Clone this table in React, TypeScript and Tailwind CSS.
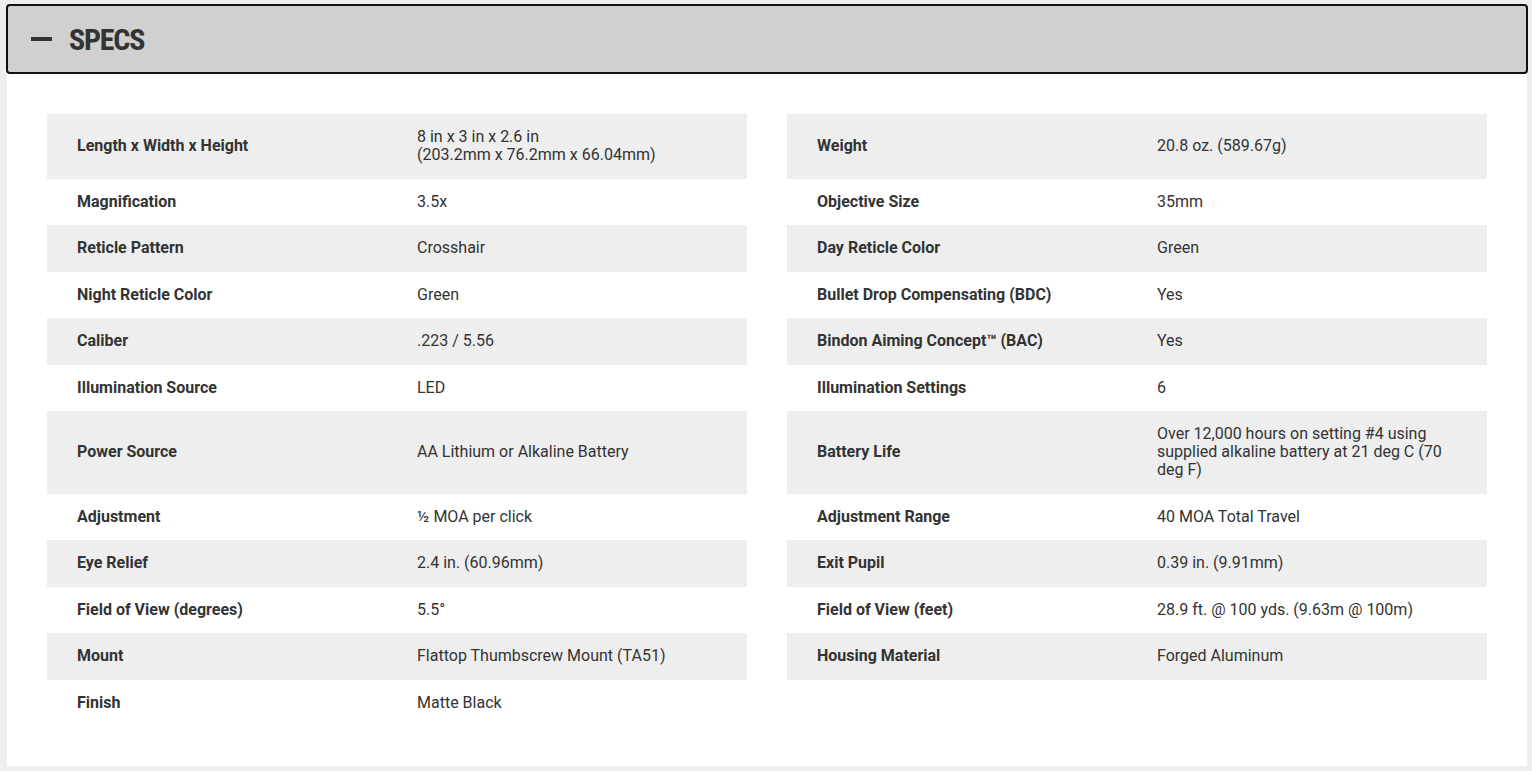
const specs: [string, string, string, string][] = [
  ["Length x Width x Height", "8 in x 3 in x 2.6 in\n(203.2mm x 76.2mm x 66.04mm)", "Weight", "20.8 oz. (589.67g)"],
  ["Magnification", "3.5x", "Objective Size", "35mm"],
  ["Reticle Pattern", "Crosshair", "Day Reticle Color", "Green"],
  ["Night Reticle Color", "Green", "Bullet Drop Compensating (BDC)", "Yes"],
  ["Caliber", ".223 / 5.56", "Bindon Aiming Concept™ (BAC)", "Yes"],
  ["Illumination Source", "LED", "Illumination Settings", "6"],
  ["Power Source", "AA Lithium or Alkaline Battery", "Battery Life", "Over 12,000 hours on setting #4 using supplied alkaline battery at 21 deg C (70 deg F)"],
  ["Adjustment", "½ MOA per click", "Adjustment Range", "40 MOA Total Travel"],
  ["Eye Relief", "2.4 in. (60.96mm)", "Exit Pupil", "0.39 in. (9.91mm)"],
  ["Field of View (degrees)", "5.5°", "Field of View (feet)", "28.9 ft. @ 100 yds. (9.63m @ 100m)"],
  ["Mount", "Flattop Thumbscrew Mount (TA51)", "Housing Material", "Forged Aluminum"],
  ["Finish", "Matte Black", "", ""],
]

function SpecCell({ label, value, striped }: { label: string; value: string; striped: boolean }) {
  return (
    <div className={`flex items-center text-[16px] leading-[18px] text-[#333] ${striped && label ? "bg-[#eeeeee]" : "bg-white"}`}>
      <div className="w-[370px] shrink-0 pl-[30px] pr-4 py-[14.25px] font-bold">{label}</div>
      <div className="flex-1 pr-[30px] py-[14.25px] whitespace-pre-line">{value}</div>
    </div>
  )
}

export default function App() {
  return (
    <div className="min-h-screen bg-[#eeeeee] pl-[6px] pr-[4px] pt-[4px] pb-[6px]" style={{ fontFamily: "Roboto, 'Liberation Sans', sans-serif" }}>
      <div className="flex items-center h-[70px] bg-[#d0d0d0] border-2 border-[#111] rounded-[4px] pl-[23px]">
        <span className="block w-[21px] h-[4px] bg-[#333]" />
        <h2 className="ml-[17px] text-[30px] font-bold text-[#333] tracking-[-1.2px]" style={{ fontFamily: "'Roboto Condensed', Roboto, sans-serif" }}>
          SPECS
        </h2>
      </div>
      <div className="ml-[1px] mr-[1px] bg-white p-[40px]">
        <div className="flex flex-col">
          {specs.map(([l1, v1, l2, v2], i) => (
            <div key={i} className="grid grid-cols-2 gap-x-[40px]">
              <SpecCell label={l1} value={v1} striped={i % 2 === 0} />
              <SpecCell label={l2} value={v2} striped={i % 2 === 0} />
            </div>
          ))}
        </div>
      </div>
    </div>
  )
}
